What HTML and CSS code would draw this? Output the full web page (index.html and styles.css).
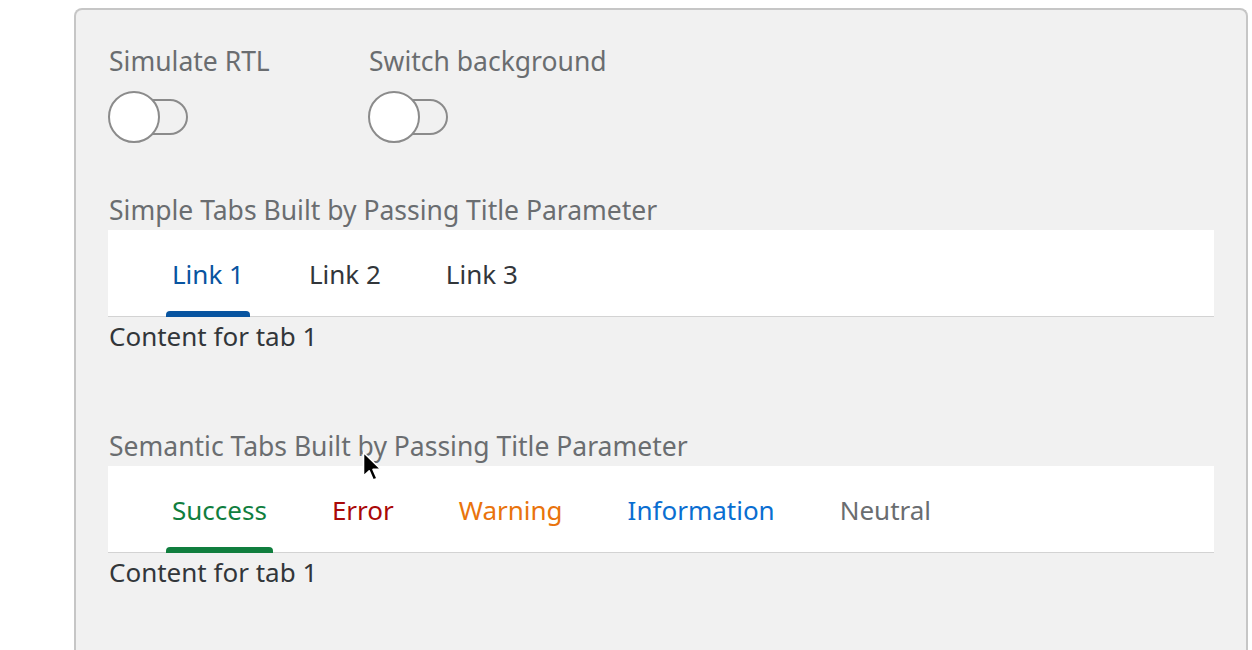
FILE: index.html
```html
<!DOCTYPE html>
<html>
<head>
<meta charset="utf-8">
<link rel="stylesheet" href="styles.css">
</head>
<body>
<div class="panel">
  <div class="controls">
    <div class="control first">
      <div class="label">Simulate RTL</div>
      <div class="toggle"><span class="track"></span><span class="knob"></span></div>
    </div>
    <div class="control">
      <div class="label">Switch background</div>
      <div class="toggle"><span class="track"></span><span class="knob"></span></div>
    </div>
  </div>

  <div class="section s1">
    <div class="label">Simple Tabs Built by Passing Title Parameter</div>
    <div class="tabbar">
      <div class="tab active blue">Link 1</div>
      <div class="tab">Link 2</div>
      <div class="tab">Link 3</div>
    </div>
    <div class="content">Content for tab 1</div>
  </div>

  <div class="section s2">
    <div class="label">Semantic Tabs Built by Passing Title Parameter</div>
    <div class="tabbar">
      <div class="tab active success">Success</div>
      <div class="tab error">Error</div>
      <div class="tab warning">Warning</div>
      <div class="tab info">Information</div>
      <div class="tab neutral">Neutral</div>
    </div>
    <div class="content">Content for tab 1</div>
  </div>
</div>
<svg class="cursor" width="24" height="34" viewBox="0 0 24 34">
  <path d="M1.5 1.5 L1.5 25 L7.2 19.8 L11.2 29 L15 27.4 L11 18.4 L18.5 18 Z" fill="#000" stroke="#fff" stroke-width="1.6" stroke-linejoin="round"/>
</svg>
</body>
</html>
```

FILE: styles.css
```css
html, body {
  margin: 0;
  padding: 0;
  background: #ffffff;
  font-family: "Noto Sans", "Open Sans", sans-serif;
  overflow: hidden;
}

.panel {
  margin: 8px 0 0 74px;
  width: 1174px;
  height: 700px;
  background: #f1f1f1;
  border: 2px solid #c6c6c6;
  border-bottom: none;
  border-radius: 8px 8px 0 0;
  padding: 0 32px 0 32px;
  box-sizing: border-box;
}

.controls {
  display: flex;
  padding-top: 35px;
}

.control.first {
  width: 260px;
}

.label {
  font-size: 26.5px;
  line-height: 32px;
  color: #6a6d70;
  padding-left: 1px;
}

.toggle {
  position: relative;
  width: 80px;
  height: 52px;
  margin-top: 14px;
}

.track {
  position: absolute;
  left: 14px;
  top: 8px;
  width: 66px;
  height: 36px;
  box-sizing: border-box;
  border: 2px solid #8b8b8b;
  border-radius: 18px;
}

.knob {
  position: absolute;
  left: 0;
  top: 0;
  width: 52px;
  height: 52px;
  box-sizing: border-box;
  border: 2px solid #8b8b8b;
  border-radius: 50%;
  background: #ffffff;
}

.section.s1 {
  margin-top: 51px;
}

.section.s2 {
  margin-top: 78px;
}

.section .label {
  margin-bottom: 4px;
}

.tabbar {
  display: flex;
  gap: 53px;
  height: 87px;
  box-sizing: border-box;
  background: #ffffff;
  border-bottom: 1px solid #d3d3d3;
  padding-left: 58px;
}

.tab {
  position: relative;
  padding: 28px 6px 0;
  font-size: 26px;
  line-height: 32px;
  color: #32363a;
}

.tab.active::after {
  content: "";
  position: absolute;
  left: 0;
  right: 0;
  bottom: -1px;
  height: 6px;
  border-radius: 4px 4px 0 0;
  background: currentColor;
}

.blue { color: #0854a0; }
.success { color: #107e3e; }
.error { color: #aa0808; }
.warning { color: #e9730c; }
.info { color: #0a6ed1; }
.neutral { color: #6a6d70; }

.content {
  font-size: 26px;
  line-height: 32px;
  color: #32363a;
  padding: 3px 0 0 1px;
}

.cursor {
  position: absolute;
  left: 362px;
  top: 451px;
}
```
